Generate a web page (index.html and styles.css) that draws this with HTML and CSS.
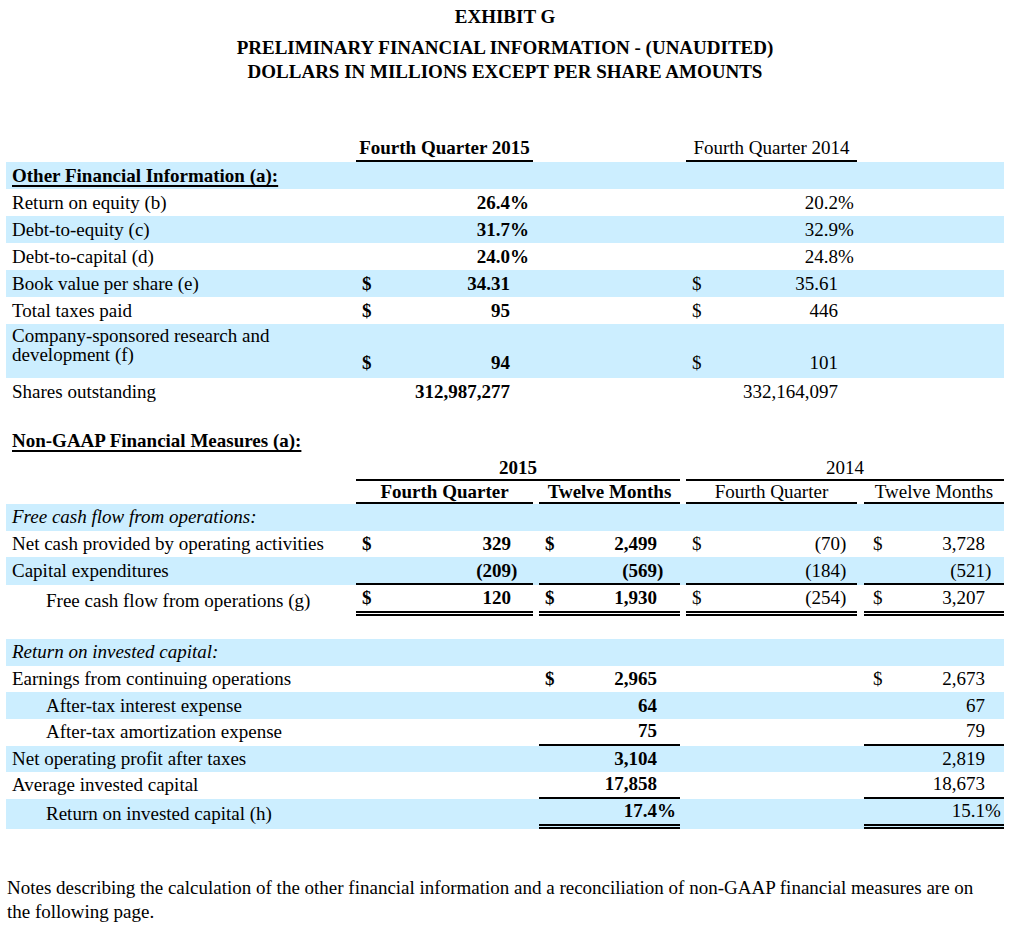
FILE: index.html
```html
<!DOCTYPE html>
<html lang="en">
<head>
<meta charset="utf-8">
<title>Exhibit G</title>
<link rel="stylesheet" href="styles.css">
</head>
<body>
<div class="page">
  <header class="titles">
    <div class="exhibit">EXHIBIT G</div>
    <div class="subtitle">PRELIMINARY FINANCIAL INFORMATION - (UNAUDITED)<br>DOLLARS IN MILLIONS EXCEPT PER SHARE AMOUNTS</div>
  </header>

  <section class="t1">
    <div class="row head">
      <div class="colhead c2 b">Fourth Quarter 2015</div>
      <div class="colhead c4">Fourth Quarter 2014</div>
    </div>
    <div class="row blue"><div class="label b u">Other Financial Information (a):</div></div>
    <div class="row">
      <div class="label">Return on equity (b)</div>
      <div class="grp c2 b"><span class="cur"></span><span class="num">26.4</span><span class="sfx s23">%</span></div>
      <div class="grp c4"><span class="cur"></span><span class="num">20.2</span><span class="sfx s19">%</span></div>
    </div>
    <div class="row blue">
      <div class="label">Debt-to-equity (c)</div>
      <div class="grp c2 b"><span class="cur"></span><span class="num">31.7</span><span class="sfx s23">%</span></div>
      <div class="grp c4"><span class="cur"></span><span class="num">32.9</span><span class="sfx s19">%</span></div>
    </div>
    <div class="row">
      <div class="label">Debt-to-capital (d)</div>
      <div class="grp c2 b"><span class="cur"></span><span class="num">24.0</span><span class="sfx s23">%</span></div>
      <div class="grp c4"><span class="cur"></span><span class="num">24.8</span><span class="sfx s19">%</span></div>
    </div>
    <div class="row blue">
      <div class="label">Book value per share (e)</div>
      <div class="grp c2 b"><span class="cur">$</span><span class="num">34.31</span><span class="sfx s23"></span></div>
      <div class="grp c4"><span class="cur">$</span><span class="num">35.61</span><span class="sfx s19"></span></div>
    </div>
    <div class="row">
      <div class="label">Total taxes paid</div>
      <div class="grp c2 b"><span class="cur">$</span><span class="num">95</span><span class="sfx s23"></span></div>
      <div class="grp c4"><span class="cur">$</span><span class="num">446</span><span class="sfx s19"></span></div>
    </div>
    <div class="row blue tall">
      <div class="label multi">Company-sponsored research and<br>development (f)</div>
      <div class="grp c2 b bottom"><span class="cur">$</span><span class="num">94</span><span class="sfx s23"></span></div>
      <div class="grp c4 bottom"><span class="cur">$</span><span class="num">101</span><span class="sfx s19"></span></div>
    </div>
    <div class="row">
      <div class="label">Shares outstanding</div>
      <div class="grp c2 b"><span class="cur"></span><span class="num">312,987,277</span><span class="sfx s23"></span></div>
      <div class="grp c4"><span class="cur"></span><span class="num">332,164,097</span><span class="sfx s19"></span></div>
    </div>
  </section>

  <h2 class="section-title b u">Non-GAAP Financial Measures (a):</h2>

  <section class="t2">
    <div class="row head years">
      <div class="colhead y2015 b">2015</div>
      <div class="colhead y2014">2014</div>
    </div>
    <div class="row head subs">
      <div class="colhead c2 b">Fourth Quarter</div>
      <div class="colhead c4 b">Twelve Months</div>
      <div class="colhead c6">Fourth Quarter</div>
      <div class="colhead c8">Twelve Months</div>
    </div>

    <div class="row blue"><div class="label i">Free cash flow from operations:</div></div>
    <div class="row">
      <div class="label">Net cash provided by operating activities</div>
      <div class="grp c2 b"><span class="cur">$</span><span class="num">329</span><span class="sfx s22"></span></div>
      <div class="grp c4 b"><span class="cur">$</span><span class="num">2,499</span><span class="sfx s23"></span></div>
      <div class="grp c6"><span class="cur">$</span><span class="num">(70</span><span class="sfx s17">)</span></div>
      <div class="grp c8 p9"><span class="cur">$</span><span class="num">3,728</span><span class="sfx s19"></span></div>
    </div>
    <div class="row blue capex">
      <div class="label">Capital expenditures</div>
      <div class="grp c2 b ul"><span class="cur"></span><span class="num">(209</span><span class="sfx s22">)</span></div>
      <div class="grp c4 b ul"><span class="cur"></span><span class="num">(569</span><span class="sfx s23">)</span></div>
      <div class="grp c6 ul"><span class="cur"></span><span class="num">(184</span><span class="sfx s17">)</span></div>
      <div class="grp c8 p9 ul"><span class="cur"></span><span class="num">(521</span><span class="sfx s19">)</span></div>
    </div>
    <div class="row total">
      <div class="label indent">Free cash flow from operations (g)</div>
      <div class="grp c2 b dbl"><span class="cur">$</span><span class="num">120</span><span class="sfx s22"></span></div>
      <div class="grp c4 b dbl"><span class="cur">$</span><span class="num">1,930</span><span class="sfx s23"></span></div>
      <div class="grp c6 dbl"><span class="cur">$</span><span class="num">(254</span><span class="sfx s17">)</span></div>
      <div class="grp c8 p9 dbl"><span class="cur">$</span><span class="num">3,207</span><span class="sfx s19"></span></div>
    </div>

    <div class="row blue gap-top"><div class="label i">Return on invested capital:</div></div>
    <div class="row">
      <div class="label">Earnings from continuing operations</div>
      <div class="grp c4 b"><span class="cur">$</span><span class="num">2,965</span><span class="sfx s23"></span></div>
      <div class="grp c8 p9"><span class="cur">$</span><span class="num">2,673</span><span class="sfx s19"></span></div>
    </div>
    <div class="row blue">
      <div class="label indent">After-tax interest expense</div>
      <div class="grp c4 b"><span class="cur"></span><span class="num">64</span><span class="sfx s23"></span></div>
      <div class="grp c8 p9"><span class="cur"></span><span class="num">67</span><span class="sfx s19"></span></div>
    </div>
    <div class="row">
      <div class="label indent">After-tax amortization expense</div>
      <div class="grp c4 b ul"><span class="cur"></span><span class="num">75</span><span class="sfx s23"></span></div>
      <div class="grp c8 p9 ul"><span class="cur"></span><span class="num">79</span><span class="sfx s19"></span></div>
    </div>
    <div class="row blue">
      <div class="label">Net operating profit after taxes</div>
      <div class="grp c4 b"><span class="cur"></span><span class="num">3,104</span><span class="sfx s23"></span></div>
      <div class="grp c8 p9"><span class="cur"></span><span class="num">2,819</span><span class="sfx s19"></span></div>
    </div>
    <div class="row">
      <div class="label">Average invested capital</div>
      <div class="grp c4 b ul"><span class="cur"></span><span class="num">17,858</span><span class="sfx s23"></span></div>
      <div class="grp c8 p9 ul"><span class="cur"></span><span class="num">18,673</span><span class="sfx s19"></span></div>
    </div>
    <div class="row blue roic">
      <div class="label indent">Return on invested capital (h)</div>
      <div class="grp c4 b dbl"><span class="cur"></span><span class="num">17.4</span><span class="sfx s23">%</span></div>
      <div class="grp c8 p9 dbl"><span class="cur"></span><span class="num">15.1</span><span class="sfx s19">%</span></div>
    </div>
  </section>

  <p class="notes">Notes describing the calculation of the other financial information and a reconciliation of non-GAAP financial measures are on<br>the following page.</p>
</div>
</body>
</html>
```

FILE: styles.css
```css
* { box-sizing: border-box; }

body {
  margin: 0;
  background: #fff;
  color: #000;
  font-family: "Liberation Serif", "Times New Roman", serif;
  font-size: 19px;
}

.page {
  width: 1010px;
  padding: 7px 6px 0 6px;
}

.titles {
  width: 998px;
  text-align: center;
  font-weight: bold;
}

.exhibit { line-height: 20px; }

.subtitle {
  margin-top: 9px;
  line-height: 24px;
}

.b { font-weight: bold; }
.i { font-style: italic; }
.u {
  text-decoration: underline;
  text-decoration-thickness: 2px;
  text-underline-offset: 3px;
  text-decoration-skip-ink: none;
}

.t1 { margin-top: 54px; width: 998px; }
.t2 { width: 998px; }

.row {
  display: grid;
  grid-auto-rows: 27px;
}

.t2 .row { grid-auto-rows: 26.6px; }

.t1 .row { grid-template-columns: 350px 177px 153px 171px 147px; }
.t2 .row { grid-template-columns: 350px 177px 6px 141px 6px 171px 7px 140px; }

.row.head { grid-auto-rows: auto; }

.blue { background: #cceeff; }

.c2 { grid-column: 2; }
.c4 { grid-column: 4; }
.c6 { grid-column: 6; }
.c8 { grid-column: 8; }
.y2015 { grid-column: 2 / 5; }
.y2014 { grid-column: 6 / 9; }

.colhead {
  text-align: center;
  line-height: 20px;
  padding-bottom: 2px;
  border-bottom: 2px solid #000;
}

.years { margin-top: 7px; }
.years .colhead { padding-bottom: 1px; }
.subs .colhead { padding-top: 1px; padding-bottom: 0; }

.label {
  grid-column: 1;
  display: flex;
  align-items: center;
  padding-left: 6px;
  white-space: nowrap;
}

.label.indent { padding-left: 40px; }

.label.multi {
  align-items: flex-start;
  line-height: 19px;
  padding-top: 2px;
}

.row.tall { grid-auto-rows: 54px; }

.grp {
  display: flex;
  align-items: center;
  padding-left: 6px;
}

.grp.p9 { padding-left: 9px; }

.grp.bottom {
  align-items: flex-end;
  padding-bottom: 4px;
}

.num {
  flex: 1;
  text-align: right;
  white-space: nowrap;
}

.sfx { flex: none; text-align: left; }
.s17 { width: 17px; }
.s19 { width: 19px; }
.s22 { width: 22px; }
.s23 { width: 23px; }

.ul { border-bottom: 2px solid #000; }
.dbl { border-bottom: 5px double #000; }

.t2 .row.capex { grid-auto-rows: 28px; }
.row.capex .ul { padding-top: 1px; }
.t2 .row.total { grid-auto-rows: 31px; }
.t2 .row.roic { grid-auto-rows: 30px; }

.gap-top { margin-top: 23px; }

.section-title {
  margin: 26px 0 0 0;
  padding-left: 6px;
  font-size: 19px;
  line-height: 20px;
}

.notes {
  margin: 47px 0 0 0;
  padding-left: 1px;
  line-height: 24px;
  white-space: nowrap;
}
```
